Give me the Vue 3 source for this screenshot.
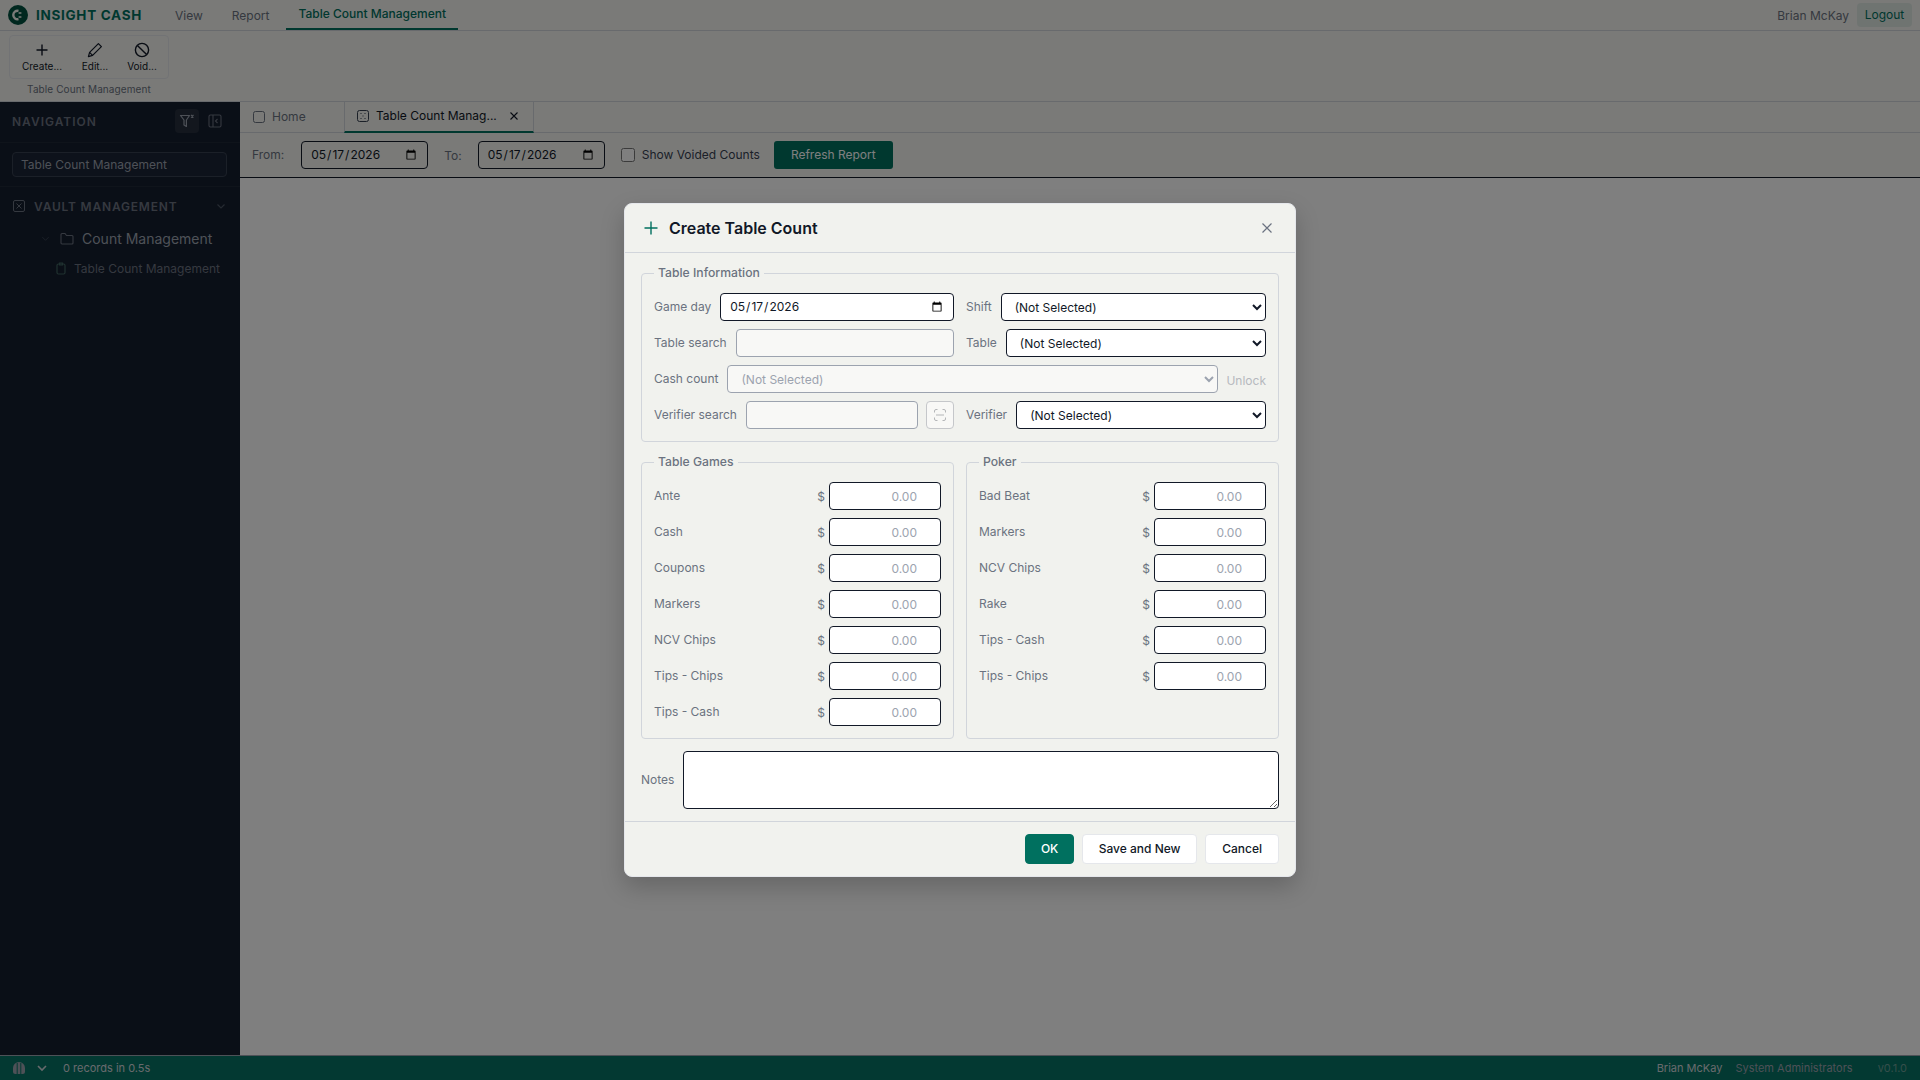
<script setup>
const tableGames = ['Ante', 'Cash', 'Coupons', 'Markers', 'NCV Chips', 'Tips - Chips', 'Tips - Cash']
const poker = ['Bad Beat', 'Markers', 'NCV Chips', 'Rake', 'Tips - Cash', 'Tips - Chips']
const dateValue = '2026-05-17'
</script>

<template>
  <div class="app">
    <header class="menubar">
      <div class="brand">
        <svg class="logo" viewBox="0 0 20 20" width="20" height="20">
          <circle cx="10" cy="10" r="10" fill="#00503f" />
          <path d="M10.500 5.800a4.300 4.300 0 1 0 0 8.400" fill="none" stroke="#f4f5f1" stroke-width="2.400" />
          <path d="M10.600 8h2.800M10.600 12h2.800" stroke="#f4f5f1" stroke-width="1.700" />
        </svg>
        <span class="brand-name">INSIGHT CASH</span>
      </div>
      <nav class="menu">
        <a class="menu-item">View</a>
        <a class="menu-item">Report</a>
        <a class="menu-item active">Table Count Management</a>
      </nav>
      <div class="user">
        <span class="user-name">Brian McKay</span>
        <button class="logout">Logout</button>
      </div>
    </header>

    <section class="ribbon">
      <div class="ribbon-group">
        <div class="ribbon-box">
          <button class="ribbon-btn create">
            <svg viewBox="0 0 16 16" width="16" height="16" fill="none" stroke="#111827" stroke-width="1.4"><path d="M8 2.500v11M2.500 8h11" /></svg>
            <span>Create...</span>
          </button>
          <button class="ribbon-btn edit">
            <svg viewBox="0 0 16 16" width="16" height="16" fill="none" stroke="#111827" stroke-width="1.2" stroke-linejoin="round"><path d="M11.400 1.600l3 3L5.600 13.400 1.400 14.600l1.200-4.200z" /><path d="M2.600 10.400l3 3" /></svg>
            <span>Edit...</span>
          </button>
          <button class="ribbon-btn void">
            <svg viewBox="0 0 16 16" width="16" height="16" fill="none" stroke="#111827" stroke-width="1.4"><circle cx="8" cy="8" r="6.600" /><path d="M3.400 3.400l9.200 9.200" /></svg>
            <span>Void...</span>
          </button>
        </div>
        <div class="ribbon-label">Table Count Management</div>
      </div>
    </section>

    <div class="workspace">
      <aside class="sidebar">
        <div class="side-head">
          <span class="side-title">NAVIGATION</span>
          <button class="filter-btn">
            <svg viewBox="0 0 16 16" width="16" height="16" fill="none" stroke="#9ca3af" stroke-width="1.200" stroke-linejoin="round"><path d="M1.500 2.500h9L7.400 7v6.500L5 12V7z" /><path d="M12 2l2.500 2.500M14.500 2L12 4.500" /></svg>
          </button>
          <svg class="collapse" viewBox="0 0 14 14" width="14" height="14" fill="none" stroke="#6b7280" stroke-width="1.100"><rect x="1" y="1" width="12" height="12" rx="1.500" /><path d="M5 1v12M9.500 5L7.500 7l2 2" /></svg>
        </div>
        <div class="side-search">
          <input class="side-input" type="text" value="Table Count Management" />
        </div>
        <div class="side-group">
          <svg viewBox="0 0 12 12" width="12" height="12" fill="none" stroke="#6b7280" stroke-width="1"><rect x=".5" y=".5" width="11" height="11" rx="1.500" /><path d="M3.500 3.500l5 5M8.500 3.500l-5 5" /></svg>
          <span class="side-group-name">VAULT MANAGEMENT</span>
          <svg class="chev" viewBox="0 0 10 10" width="10" height="10" fill="none" stroke="#4b5563" stroke-width="1.200"><path d="M1.500 3.500L5 7l3.500-3.500" /></svg>
        </div>
        <div class="tree-folder">
          <svg viewBox="0 0 10 10" width="9" height="9" fill="none" stroke="#374151" stroke-width="1.100"><path d="M1.500 3.500L5 7l3.500-3.500" /></svg>
          <svg class="folder" viewBox="0 0 14 13" width="14" height="13" fill="none" stroke="#6b7280" stroke-width="1.100"><path d="M1 2.500a1 1 0 0 1 1-1h3l1.500 2H12a1 1 0 0 1 1 1V11a1 1 0 0 1-1 1H2a1 1 0 0 1-1-1z" /></svg>
          <span>Count Management</span>
        </div>
        <div class="tree-leaf">
          <svg viewBox="0 0 10 13" width="10" height="13" fill="none" stroke="#3f6360" stroke-width="1.200"><rect x="1" y="2" width="8" height="10" rx="1.500" /><path d="M3.500 1h3v2h-3z" /></svg>
          <span>Table Count Management</span>
        </div>
      </aside>

      <main class="content">
        <div class="tabs">
          <div class="tab home">
            <svg viewBox="0 0 12 12" width="12" height="12" fill="none" stroke="#6b7280" stroke-width="1"><rect x=".5" y=".5" width="11" height="11" rx="2" /></svg>
            <span>Home</span>
          </div>
          <div class="tab current">
            <svg viewBox="0 0 12 12" width="12" height="12" fill="none" stroke="#374151" stroke-width="1"><rect x=".5" y=".5" width="11" height="11" rx="2" /><path d="M3.500 3.500h1M7.500 3.500h1M3.500 8.500h1M7.500 8.500h1M5.500 6h1" /></svg>
            <span class="tab-text">Table Count Manag...</span>
            <svg class="tab-close" viewBox="0 0 10 10" width="10" height="10" fill="none" stroke="#111827" stroke-width="1.100"><path d="M1.500 1.500l7 7M8.500 1.500l-7 7" /></svg>
          </div>
        </div>
        <div class="toolbar">
          <label class="tool-label from">From:</label>
          <input class="field tool-date" type="date" :value="dateValue" />
          <label class="tool-label to">To:</label>
          <input class="field tool-date" type="date" :value="dateValue" />
          <label class="check">
            <input type="checkbox" />
            <span>Show Voided Counts</span>
          </label>
          <button class="refresh">Refresh Report</button>
        </div>
        <div class="report"></div>
      </main>
    </div>

    <footer class="statusbar">
      <svg class="status-lock" viewBox="0 0 12 12" width="12" height="12">
        <path d="M0 6a6 6 0 0 1 12 0v3.500A2.500 2.500 0 0 1 9.500 12h-7A2.500 2.500 0 0 1 0 9.500z" fill="#9ca3af" />
        <path d="M4.200 1v11M7.800 1v11" stroke="#067264" stroke-width="1" />
      </svg>
      <svg class="status-chev" viewBox="0 0 10 10" width="10" height="10" fill="none" stroke="#d1d5db" stroke-width="1.600"><path d="M1 3l4 4 4-4" /></svg>
      <span class="records">0 records in 0.5s</span>
      <span class="status-user">Brian McKay</span>
      <span class="status-group">System Administrators</span>
      <span class="status-version">v0.1.0</span>
    </footer>

    <div class="overlay">
      <div class="modal">
        <div class="modal-head">
          <svg viewBox="0 0 16 16" width="16" height="16" fill="none" stroke="#00705f" stroke-width="1.400"><path d="M8 1.500v13M1.500 8h13" /></svg>
          <h2>Create Table Count</h2>
          <svg class="modal-close" viewBox="0 0 12 12" width="12" height="12" fill="none" stroke="#6b7280" stroke-width="1.200"><path d="M1.500 1.500l9 9M10.500 1.500l-9 9" /></svg>
        </div>

        <div class="modal-body">
          <fieldset class="box">
            <legend>Table Information</legend>
            <div class="info-rows">
              <div class="info-row">
                <div class="pair">
                  <label>Game day</label>
                  <input class="field grow date" type="date" :value="dateValue" />
                </div>
                <div class="pair">
                  <label>Shift</label>
                  <select class="field grow"><option>(Not Selected)</option></select>
                </div>
              </div>
              <div class="info-row">
                <div class="pair">
                  <label>Table search</label>
                  <input class="field grow off" type="text" />
                </div>
                <div class="pair">
                  <label>Table</label>
                  <select class="field grow"><option>(Not Selected)</option></select>
                </div>
              </div>
              <div class="pair">
                <label>Cash count</label>
                <select class="field grow off" disabled><option>(Not Selected)</option></select>
                <span class="unlock">Unlock</span>
              </div>
              <div class="info-row">
                <div class="pair">
                  <label>Verifier search</label>
                  <input class="field grow off" type="text" />
                  <button class="scan">
                    <svg viewBox="0 0 14 14" width="14" height="14" fill="none" stroke="#b4b6b8" stroke-width="1"><path d="M1.500 4.500V3a1.500 1.500 0 0 1 1.500-1.500h1.500M9.500 1.500H11A1.500 1.500 0 0 1 12.500 3v1.500M12.500 9.500V11A1.500 1.500 0 0 1 11 12.500H9.500M4.500 12.500H3A1.500 1.500 0 0 1 1.500 11V9.500M3 7h8" /></svg>
                  </button>
                </div>
                <div class="pair">
                  <label>Verifier</label>
                  <select class="field grow"><option>(Not Selected)</option></select>
                </div>
              </div>
            </div>
          </fieldset>

          <div class="amounts">
            <fieldset class="box">
              <legend>Table Games</legend>
              <div class="amount-list">
                <div v-for="name in tableGames" :key="name" class="amount">
                  <label>{{ name }}</label>
                  <span class="dollar">$</span>
                  <input class="field money" type="text" placeholder="0.00" />
                </div>
              </div>
            </fieldset>
            <fieldset class="box">
              <legend>Poker</legend>
              <div class="amount-list">
                <div v-for="name in poker" :key="name" class="amount">
                  <label>{{ name }}</label>
                  <span class="dollar">$</span>
                  <input class="field money" type="text" placeholder="0.00" />
                </div>
              </div>
            </fieldset>
          </div>

          <div class="notes">
            <label>Notes</label>
            <textarea class="field note-area"></textarea>
          </div>
        </div>

        <div class="modal-foot">
          <button class="btn primary">OK</button>
          <button class="btn save">Save and New</button>
          <button class="btn">Cancel</button>
        </div>
      </div>
    </div>
  </div>
</template>

<style>
html,
body {
  margin: 0;
  background: #ffffff;
}
</style>

<style scoped>
* {
  box-sizing: border-box;
}

.app {
  position: relative;
  display: flex;
  flex-direction: column;
  height: 100vh;
  overflow: hidden;
  font-family: Inter, "Liberation Sans", sans-serif;
  font-size: 12px;
  color: #111827;
  background: #ffffff;
}

/* top menu */
.menubar {
  display: flex;
  align-items: stretch;
  height: 31px;
  flex-shrink: 0;
  padding: 0 8px;
  background: #f4f5f1;
  border-bottom: 1px solid #d1d5db;
}

.brand {
  display: flex;
  align-items: center;
  gap: 8px;
  margin-right: 21px;
}

.brand-name {
  font-size: 13.5px;
  font-weight: 700;
  letter-spacing: 0.7px;
  color: #00705f;
}

.menu {
  display: flex;
  gap: 5px;
}

.menu-item {
  display: flex;
  align-items: center;
  padding: 0 12px;
  height: 30px;
  color: #6b7280;
}

.menu-item.active {
  padding-bottom: 2px;
  color: #00705f;
  border-bottom: 2px solid #00705f;
  font-weight: 500;
}

.user {
  display: flex;
  align-items: center;
  gap: 8px;
  margin-left: auto;
}

.user-name {
  color: #6b7280;
}

.logout {
  height: 24px;
  width: 55px;
  padding: 0 0 2px;
  border: 0;
  border-radius: 4px;
  background: #dfe8e3;
  color: #00705f;
  font: inherit;
}

/* ribbon */
.ribbon {
  display: flex;
  height: 71px;
  flex-shrink: 0;
  padding: 4px 9px 0;
  background: #f4f5f1;
  border-bottom: 1px solid #d1d5db;
}

.ribbon-group {
  display: flex;
  flex-direction: column;
  width: 160px;
}

.ribbon-box {
  display: flex;
  height: 44px;
  border: 1px solid #e5e7eb;
  border-radius: 4px;
}

.ribbon-btn {
  display: flex;
  flex-direction: column;
  align-items: center;
  gap: 2px;
  padding: 6px 0 0;
  border: 0;
  background: none;
  font-family: inherit;
  font-size: 10px;
  color: #111827;
  white-space: nowrap;
}

.ribbon-btn.create {
  width: 64px;
}

.ribbon-btn.edit {
  width: 42px;
}

.ribbon-btn.void {
  width: 52px;
}

.ribbon-label {
  margin-top: 4px;
  text-align: center;
  font-size: 10px;
  letter-spacing: 0.1px;
  color: #6b7280;
}

/* main */
.workspace {
  display: flex;
  flex: 1;
  min-height: 0;
}

.sidebar {
  width: 240px;
  flex-shrink: 0;
  background: #151e2e;
  color: #9ca3af;
}

.side-head {
  display: flex;
  align-items: center;
  height: 41px;
  padding: 0 0 2px 12px;
  border-bottom: 1px solid #1f2937;
}

.side-title {
  flex: 1;
  font-size: 12px;
  font-weight: 600;
  letter-spacing: 1px;
  color: #6b7280;
}

.filter-btn {
  display: flex;
  align-items: center;
  justify-content: center;
  width: 24px;
  height: 24px;
  padding: 0;
  border: 0;
  border-radius: 4px;
  background: #262f3d;
}

.collapse {
  margin: 0 18px 0 9px;
}

.side-search {
  padding: 9px 12px 9px;
  border-bottom: 1px solid #1f2937;
}

.side-input {
  display: block;
  width: 215px;
  height: 25px;
  padding: 0 8px;
  border: 1px solid #374151;
  border-radius: 4px;
  background: #1a2436;
  color: #9ca3af;
  font: inherit;
}

.side-group {
  display: flex;
  align-items: center;
  gap: 9px;
  height: 20px;
  margin-top: 9px;
  padding: 0 14px 0 13px;
  font-size: 12px;
  font-weight: 600;
  letter-spacing: 0.8px;
  color: #6b7280;
}

.side-group-name {
  flex: 1;
}

.tree-folder {
  display: flex;
  align-items: center;
  height: 22px;
  margin-top: 11px;
  padding-left: 41px;
  font-size: 14px;
  color: #9ca3af;
}

.folder {
  margin: 0 8px 0 10px;
}

.tree-leaf {
  display: flex;
  align-items: center;
  gap: 8px;
  height: 22px;
  margin-top: 8px;
  padding-left: 56px;
  color: #6b7280;
}

.content {
  display: flex;
  flex: 1;
  flex-direction: column;
  min-width: 0;
  background: #ffffff;
}

.tabs {
  display: flex;
  height: 31px;
  flex-shrink: 0;
  background: #f4f5f1;
  border-bottom: 1px solid #d1d5db;
}

.tab {
  display: flex;
  align-items: center;
  gap: 7px;
  padding-left: 13px;
}

.tab.home {
  width: 104px;
  padding-bottom: 1px;
  color: #6b7280;
}

.tab.current {
  width: 190px;
  height: 31px;
  padding-bottom: 2px;
  padding-left: 12px;
  background: #f4f5f1;
  border-left: 1px solid #d1d5db;
  border-right: 1px solid #d1d5db;
  border-bottom: 2px solid #00705f;
}

.tab-text {
  width: 122px;
  white-space: nowrap;
}

.tab-close {
  margin-left: 4px;
}

.toolbar {
  display: flex;
  align-items: center;
  height: 45px;
  flex-shrink: 0;
  padding: 0 12px;
  background: #f4f5f1;
  border-bottom: 1px solid #111827;
}

.tool-label {
  color: #6b7280;
}

.tool-label.from {
  margin-right: 17px;
}

.tool-label.to {
  margin: 0 16px 0 16px;
}

.field {
  height: 28px;
  border: 1px solid #111827;
  border-radius: 4px;
  background: #ffffff;
  color: #111827;
  font-family: inherit;
  font-size: 12px;
}

.tool-date {
  width: 127px;
  padding: 0 8px 1px;
  background: #f4f5f1;
}

.check {
  display: flex;
  align-items: center;
  gap: 7px;
  margin-left: 16px;
  color: #374151;
}

.check input {
  width: 14px;
  height: 14px;
  margin: 0;
}

.refresh {
  height: 28px;
  width: 119px;
  margin-left: 14px;
  padding: 0 0 2px;
  border: 0;
  border-radius: 3px;
  background: #00705f;
  color: #ffffff;
  font: inherit;
}

.report {
  flex: 1;
}

/* status */
.statusbar {
  display: flex;
  align-items: center;
  height: 25px;
  flex-shrink: 0;
  padding: 0 13px;
  background: #067264;
  border-top: 1px solid #9ca3af;
  font-size: 11px;
  color: #d1d5db;
}

.status-chev {
  margin-left: 12px;
}

.records {
  margin-left: 16px;
  flex: 1;
}

.status-group {
  margin-left: 13px;
  color: #9ca3af;
}

.status-version {
  margin-left: 25px;
  color: #6b9e96;
}

/* dialog */
.overlay {
  position: absolute;
  inset: 0;
  display: flex;
  align-items: center;
  justify-content: center;
  background: rgba(0, 0, 0, 0.5);
}

.modal {
  width: 672px;
  background: #f1f2ee;
  border: 1px solid #e5e7eb;
  border-radius: 8px;
  box-shadow: 0 10px 25px rgba(0, 0, 0, 0.2);
}

.modal-head {
  display: flex;
  align-items: center;
  gap: 10px;
  height: 49px;
  padding: 0 22px 0 18px;
  border-bottom: 1px solid #d1d5db;
}

.modal-head h2 {
  flex: 1;
  margin: 0;
  font-size: 16px;
  font-weight: 600;
  color: #111827;
}

.modal-body {
  padding: 12px 16px;
}

.box {
  min-width: 0;
  margin: 0;
  padding: 12px;
  border: 1px solid #d1d5db;
  border-radius: 4px;
}

.box legend {
  padding: 0 4px;
  font-size: 12.2px;
  font-weight: 500;
  line-height: 16px;
  color: #6b7280;
}

.info-rows,
.amount-list {
  display: flex;
  flex-direction: column;
  gap: 8px;
}

.info-row {
  display: grid;
  grid-template-columns: 1fr 1fr;
  gap: 12px;
}

.pair {
  display: flex;
  align-items: center;
  gap: 8px;
  min-width: 0;
}

.pair label {
  margin-right: 1px;
}

label {
  margin-top: -1px;
  color: #6b7280;
  white-space: nowrap;
}

.grow {
  flex: 1;
  min-width: 0;
  padding: 0 8px;
}

.grow.date {
  padding-bottom: 1px;
}

select.grow {
  padding-left: 9px;
}

.off {
  background: #f8f8f6;
  border-color: #9ca3af;
  color: #9ca3af;
  opacity: 1;
}

.unlock {
  color: #b6b9be;
  margin-top: 2px;
}

.scan {
  display: flex;
  align-items: center;
  justify-content: center;
  width: 28px;
  height: 28px;
  flex-shrink: 0;
  padding: 0;
  border: 1px solid #c5c7ca;
  border-radius: 4px;
  background: #f8f8f6;
}

.amounts {
  display: grid;
  grid-template-columns: 1fr 1fr;
  gap: 12px;
  margin-top: 12px;
}

.amount {
  display: flex;
  align-items: center;
}

.amount label {
  flex: 1;
}

.dollar {
  margin-right: 4px;
  color: #6b7280;
}

.money {
  width: 112px;
  padding: 0 23px 0 8px;
  text-align: right;
}

.money::placeholder {
  color: #9ca3af;
}

.notes {
  display: flex;
  align-items: center;
  gap: 9px;
  margin-top: 12px;
}

.note-area {
  flex: 1;
  height: 58px;
  padding: 6px 8px;
}

.modal-foot {
  display: flex;
  justify-content: flex-end;
  gap: 8px;
  padding: 12px 16px;
  border-top: 1px solid #d1d5db;
}

.btn {
  height: 30px;
  padding: 0 16px 2px;
  border: 1px solid #e5e7eb;
  border-radius: 4px;
  background: #ffffff;
  color: #111827;
  font-family: inherit;
  font-size: 12px;
  font-weight: 500;
}

.btn.save {
  width: 115px;
  padding: 0 0 2px;
}

.btn.primary {
  width: 49px;
  padding: 0 0 2px;
  border-color: #00705f;
  background: #00705f;
  color: #ffffff;
}
</style>
